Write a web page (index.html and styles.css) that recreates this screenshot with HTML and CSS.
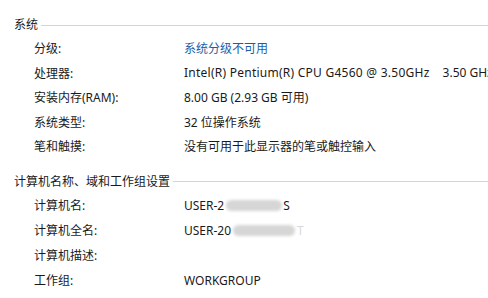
FILE: index.html
```html
<!DOCTYPE html>
<html>
<head>
<meta charset="utf-8">
<link rel="stylesheet" href="styles.css">
</head>
<body>
<div class="panel">
  <div class="section">
    <div class="head"><span class="head-text">系统</span><span class="rule"></span></div>
    <div class="row"><span class="label">分级:</span><span class="value link">系统分级不可用</span></div>
    <div class="row"><span class="label">处理器:</span><span class="value clip"><span class="cpu">Intel(R) Pentium(R) CPU G4560 @ 3.50GHz</span><span class="gap"></span>3.50 GHz</span></div>
    <div class="row"><span class="label">安装内存(RAM):</span><span class="value">8.00 GB (2.93 GB 可用)</span></div>
    <div class="row"><span class="label">系统类型:</span><span class="value">32 位操作系统</span></div>
    <div class="row"><span class="label">笔和触摸:</span><span class="value">没有可用于此显示器的笔或触控输入</span></div>
  </div>
  <div class="section second">
    <div class="head"><span class="head-text">计算机名称、域和工作组设置</span><span class="rule"></span></div>
    <div class="row"><span class="label">计算机名:</span><span class="value">USER-2<span class="blur b1"></span>S</span></div>
    <div class="row"><span class="label">计算机全名:</span><span class="value">USER-20<span class="blur b2"></span><span class="faint">T</span></span></div>
    <div class="row"><span class="label">计算机描述:</span><span class="value"></span></div>
    <div class="row"><span class="label">工作组:</span><span class="value">WORKGROUP</span></div>
  </div>
</div>
</body>
</html>
```
FILE: styles.css
```css
html, body {
  margin: 0;
  padding: 0;
  background: #ffffff;
}
body {
  font-family: "Noto Sans", "Noto Sans CJK SC", sans-serif;
  font-size: 12px;
  color: #1a1a1a;
  width: 488px;
  height: 298px;
  overflow: hidden;
}
.panel {
  padding: 15px 0 0 14px;
}
.head {
  display: flex;
  align-items: center;
  height: 18px;
}
.head-text {
  white-space: nowrap;
  padding-right: 3px;
}
.rule {
  flex: 1;
  height: 1px;
  background: #d5d5d5;
  margin-top: 2px;
}
.row {
  display: flex;
  align-items: center;
  height: 24.5px;
  padding-left: 20px;
  white-space: nowrap;
}
.section > .head + .row {
  margin-top: 3px;
}
.second .row {
  height: 25px;
}
.label {
  width: 150px;
  flex: none;
}
.value {
  display: flex;
  align-items: center;
  white-space: pre;
}
.clip {
  flex: 1;
  min-width: 0;
  overflow: hidden;
}
.cpu {
  letter-spacing: 0.25px;
}
.gap {
  width: 13px;
  flex: none;
}
.link {
  color: #1a5ea8;
}
.second {
  margin-top: 13px;
}
.blur {
  display: inline-block;
  height: 11px;
  background: #d6d6d6;
  border-radius: 6px;
  filter: blur(1.5px);
}
.b1 { width: 56px; margin: 0 1px 0 2px; }
.b2 { width: 62px; margin: 0 2px 0 2px; }
.faint { color: #d8d8d8; }
```
